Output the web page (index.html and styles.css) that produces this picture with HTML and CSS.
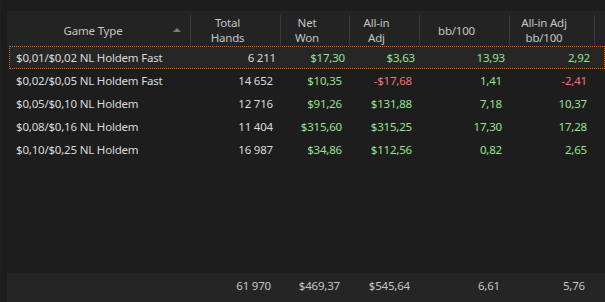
FILE: index.html
```html
<!DOCTYPE html>
<html>
<head>
<meta charset="utf-8">
<link rel="stylesheet" href="styles.css">
</head>
<body>
<div class="view">
  <div class="table">
    <div class="head">
      <div class="hcell game"><span class="label">Game Type</span><span class="sort"></span></div>
      <div class="hcell">Total<br>Hands</div>
      <div class="hcell">Net<br>Won</div>
      <div class="hcell">All-in<br>Adj</div>
      <div class="hcell">bb/100</div>
      <div class="hcell">All-in Adj<br>bb/100</div>
      <div class="hcell last"></div>
    </div>
    <div class="rows">
      <div class="row selected">
        <div class="cell name">$0,01/$0,02 NL Holdem Fast</div>
        <div class="cell">6 211</div>
        <div class="cell pos">$17,30</div>
        <div class="cell pos">$3,63</div>
        <div class="cell pos">13,93</div>
        <div class="cell pos">2,92</div>
        <div class="cell"></div>
      </div>
      <div class="row">
        <div class="cell name">$0,02/$0,05 NL Holdem Fast</div>
        <div class="cell">14 652</div>
        <div class="cell pos">$10,35</div>
        <div class="cell neg">-$17,68</div>
        <div class="cell pos">1,41</div>
        <div class="cell neg">-2,41</div>
        <div class="cell"></div>
      </div>
      <div class="row">
        <div class="cell name">$0,05/$0,10 NL Holdem</div>
        <div class="cell">12 716</div>
        <div class="cell pos">$91,26</div>
        <div class="cell pos">$131,88</div>
        <div class="cell pos">7,18</div>
        <div class="cell pos">10,37</div>
        <div class="cell"></div>
      </div>
      <div class="row">
        <div class="cell name">$0,08/$0,16 NL Holdem</div>
        <div class="cell">11 404</div>
        <div class="cell pos">$315,60</div>
        <div class="cell pos">$315,25</div>
        <div class="cell pos">17,30</div>
        <div class="cell pos">17,28</div>
        <div class="cell"></div>
      </div>
      <div class="row">
        <div class="cell name">$0,10/$0,25 NL Holdem</div>
        <div class="cell">16 987</div>
        <div class="cell pos">$34,86</div>
        <div class="cell pos">$112,56</div>
        <div class="cell pos">0,82</div>
        <div class="cell pos">2,65</div>
        <div class="cell"></div>
      </div>
    </div>
    <div class="foot">
      <div class="fcell"></div>
      <div class="fcell">61 970</div>
      <div class="fcell">$469,37</div>
      <div class="fcell">$545,64</div>
      <div class="fcell">6,61</div>
      <div class="fcell">5,76</div>
      <div class="fcell"></div>
    </div>
  </div>
</div>
</body>
</html>
```
FILE: styles.css
```css
html, body {
  margin: 0;
  padding: 0;
  background: #1c1c1c;
}
body {
  font-family: "Noto Sans", "Open Sans", sans-serif;
  font-size: 11.5px;
  letter-spacing: -0.2px;
  color: #dadada;
  width: 605px;
  height: 302px;
  overflow: hidden;
}
.view {
  height: 302px;
  padding-left: 6px;
  box-sizing: border-box;
  background: #1c1c1c;
  border-left: 1px solid #202020;
}
.table {
  display: flex;
  flex-direction: column;
  height: 100%;
  padding-top: 11px;
  box-sizing: border-box;
  background: #1d1d1d;
}
.head, .row, .foot {
  display: grid;
  grid-template-columns: 184px 90px 69px 70px 90px 85px 1fr;
}
.head {
  height: 35px;
  background: #232323;
  color: #c4c4c4;
}
.hcell {
  margin: 4px 0 2px;
  border-right: 1px solid #3a3a3a;
  display: flex;
  align-items: center;
  justify-content: center;
  text-align: center;
  line-height: 15px;
  padding-right: 16px;
}
.hcell.last {
  border-right: none;
}
.hcell.game {
  padding: 0 9px 0 6px;
}
.game .label {
  flex: 1;
  text-align: center;
}
.sort {
  width: 0;
  height: 0;
  border-left: 4px solid transparent;
  border-right: 4px solid transparent;
  border-bottom: 4px solid #7c7c7c;
}
.rows {
  flex: 1;
}
.row {
  height: 23px;
  line-height: 24px;
  box-sizing: border-box;
}
.row.selected {
  background: #262626;
  border: 1px dotted #d0661c;
  margin-left: 2px;
  line-height: 22px;
}
.cell {
  text-align: right;
  padding-right: 8px;
  white-space: nowrap;
}
.cell.name {
  text-align: left;
  padding-left: 9px;
}
.selected .cell.name {
  padding-left: 6px;
}
.selected .cell:first-child {
  width: 182px;
}
.pos {
  color: #95e28f;
}
.neg {
  color: #f07373;
}
.foot {
  height: 29px;
  background: #252525;
  color: #c6c6c6;
  padding-top: 5px;
  box-sizing: border-box;
  line-height: 16px;
}
.fcell {
  text-align: right;
  padding-right: 10px;
}
```
